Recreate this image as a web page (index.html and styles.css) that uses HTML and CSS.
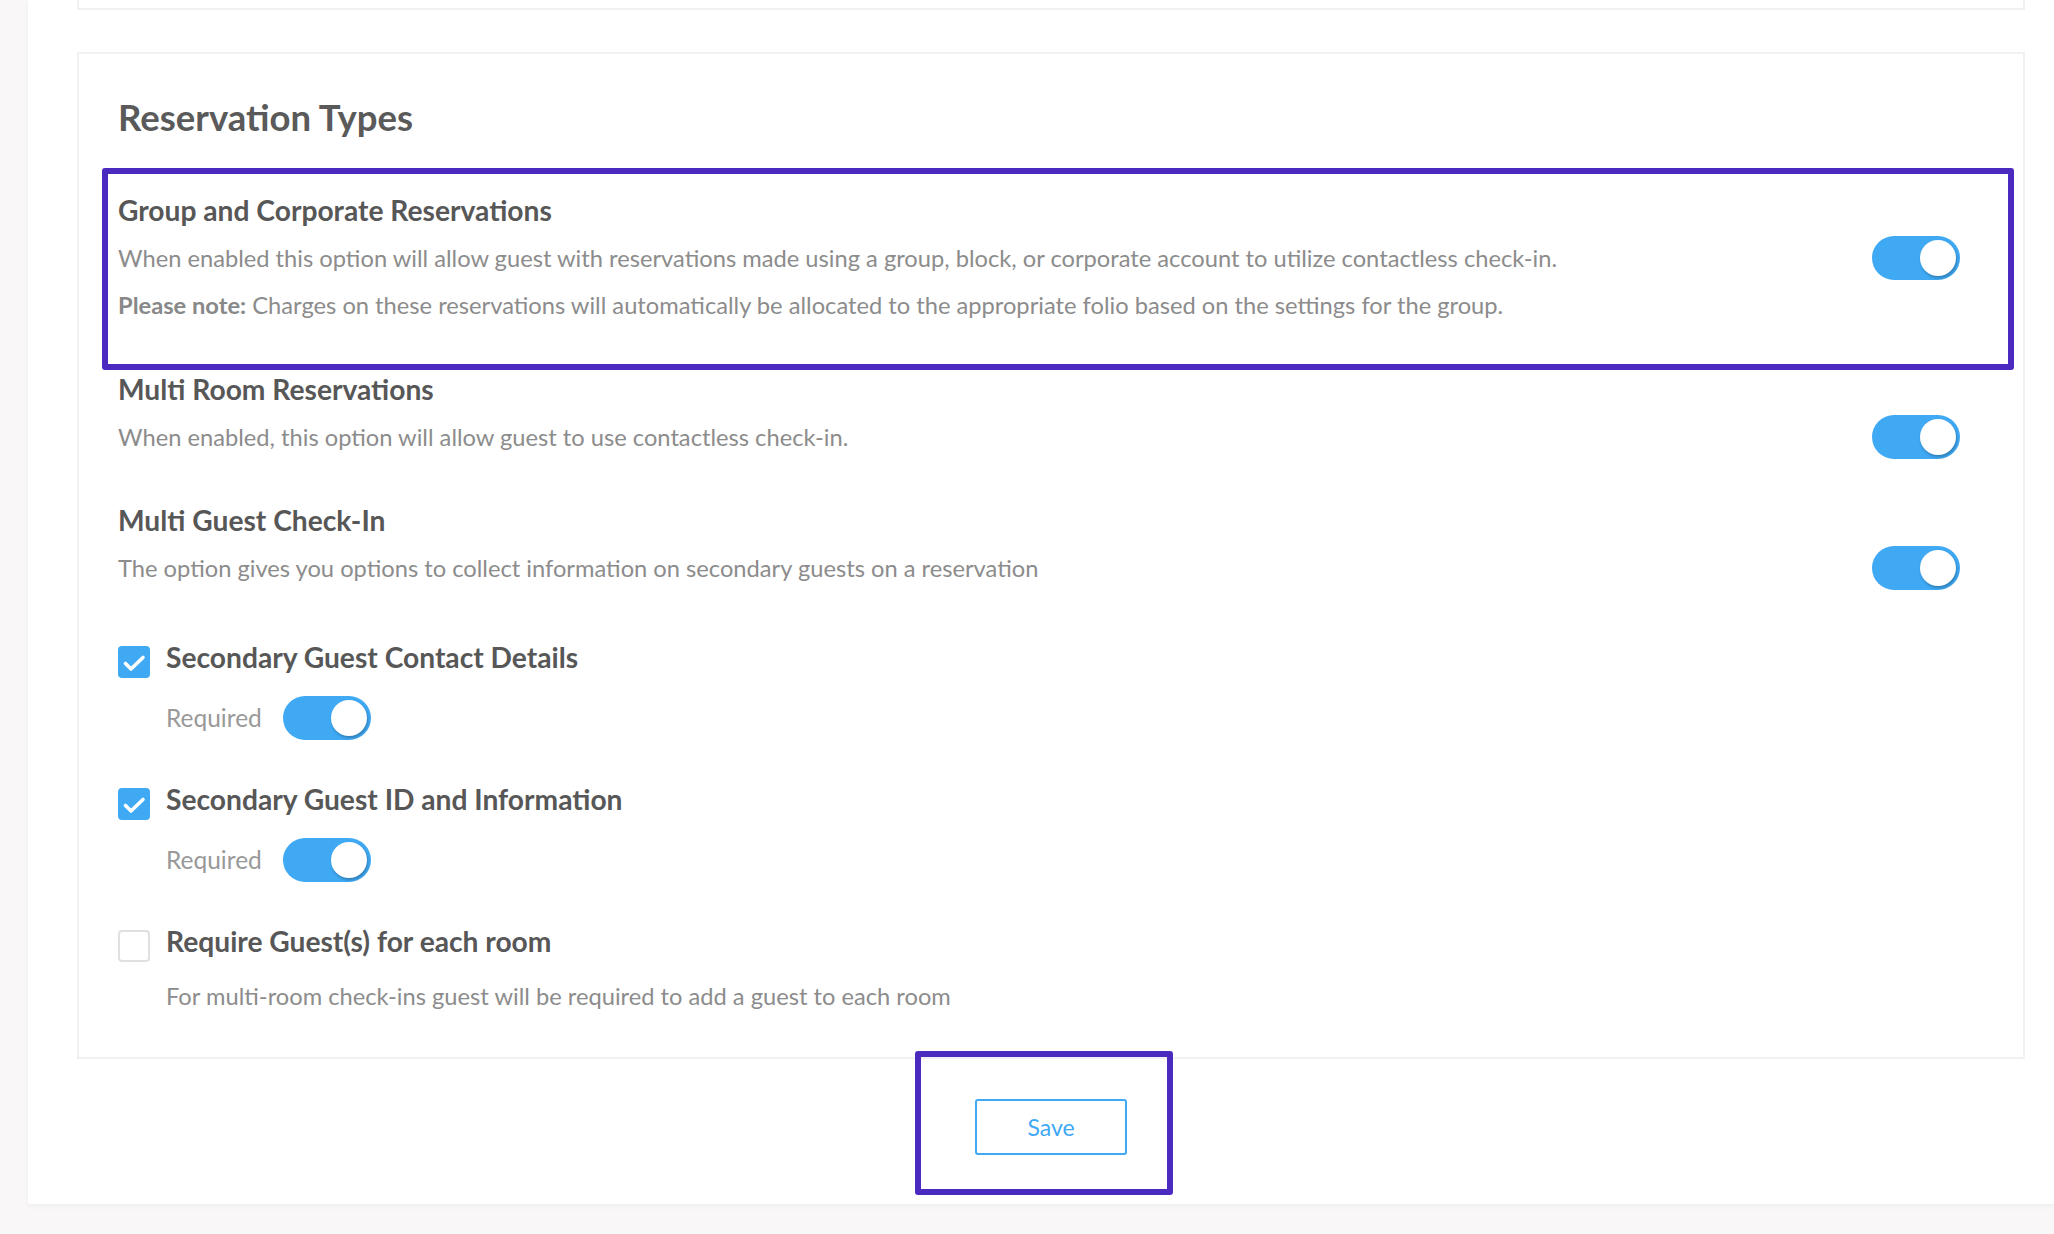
FILE: index.html
```html
<!DOCTYPE html>
<html lang="en">
  <head>
    <meta charset="UTF-8" />
    <meta name="viewport" content="width=device-width, initial-scale=1.0" />
    <title>Reservation Types</title>
    <link rel="stylesheet" href="styles.css">
  </head>
  <body>
    <div class="panel">
      <div class="top-card"></div>

      <section class="card">
        <h2 class="card-title">Reservation Types</h2>

        <div class="option option-group highlight">
          <h3 class="option-title">Group and Corporate Reservations</h3>
          <div class="option-line">
            <p class="option-desc">When enabled this option will allow guest with reservations made using a group, block, or corporate account to utilize contactless check-in.</p>
            <span class="switch"><span class="knob"></span></span>
          </div>
          <p class="option-desc option-note"><strong>Please note:</strong> Charges on these reservations will automatically be allocated to the appropriate folio based on the settings for the group.</p>
        </div>

        <div class="option option-room">
          <h3 class="option-title">Multi Room Reservations</h3>
          <div class="option-line">
            <p class="option-desc">When enabled, this option will allow guest to use contactless check-in.</p>
            <span class="switch"><span class="knob"></span></span>
          </div>
        </div>

        <div class="option option-guest">
          <h3 class="option-title">Multi Guest Check-In</h3>
          <div class="option-line">
            <p class="option-desc">The option gives you options to collect information on secondary guests on a reservation</p>
            <span class="switch"><span class="knob"></span></span>
          </div>
        </div>

        <div class="sub-option">
          <div class="check-line">
            <span class="checkbox checked">
              <svg width="32" height="32" viewBox="0 0 32 32"><polyline points="7.5,17.5 13,23 25,11.5" fill="none" stroke="#fff" stroke-width="3.6" stroke-linecap="round" stroke-linejoin="round"/></svg>
            </span>
            <span class="sub-title">Secondary Guest Contact Details</span>
          </div>
          <div class="required-line">
            <span class="required-label">Required</span>
            <span class="switch"><span class="knob"></span></span>
          </div>
        </div>

        <div class="sub-option">
          <div class="check-line">
            <span class="checkbox checked">
              <svg width="32" height="32" viewBox="0 0 32 32"><polyline points="7.5,17.5 13,23 25,11.5" fill="none" stroke="#fff" stroke-width="3.6" stroke-linecap="round" stroke-linejoin="round"/></svg>
            </span>
            <span class="sub-title">Secondary Guest ID and Information</span>
          </div>
          <div class="required-line">
            <span class="required-label">Required</span>
            <span class="switch"><span class="knob"></span></span>
          </div>
        </div>

        <div class="sub-option last">
          <div class="check-line">
            <span class="checkbox"></span>
            <span class="sub-title">Require Guest(s) for each room</span>
          </div>
          <p class="option-desc sub-desc">For multi-room check-ins guest will be required to add a guest to each room</p>
        </div>
      </section>

      <div class="actions">
        <button class="save-button highlight">Save</button>
      </div>
    </div>
  </body>
</html>
```

FILE: styles.css
```css
body {
  margin: 0;
  min-height: 100vh;
  background-color: #f9f7f8;
  font-family: Lato, "Open Sans", sans-serif;
}

.panel {
  margin-left: 28px;
  padding: 0 29px 49px 49px;
  background-color: white;
  box-shadow: 0 2px 5px rgba(0, 0, 0, 0.05);
}

.top-card {
  height: 8px;
  border: 2px solid #f1f1f1;
  border-top: none;
  background-color: white;
}

.card {
  margin-top: 42px;
  border: 2px solid #f1f1f1;
  padding: 41px 63px 46px 39px;
}

.card-title {
  margin: 0 0 54px;
  font-size: 36.5px;
  line-height: 44px;
  font-weight: 700;
  color: #5a5a5a;
}

.option-title,
.sub-title {
  margin: 0;
  font-size: 28.2px;
  line-height: 34px;
  font-weight: 700;
  color: #575757;
}

.option-line {
  display: flex;
  justify-content: space-between;
  align-items: center;
  height: 44px;
  margin-top: 9px;
}

.option-desc {
  margin: 0;
  font-size: 23.7px;
  line-height: 30px;
  color: #8c8c8c;
}

.option-desc strong {
  font-weight: 700;
  color: #888;
}

.option-note {
  margin-top: 10px;
}

.option-group {
  margin-bottom: 52px;
}

.option-room {
  margin-bottom: 44px;
}

.option-guest {
  margin-bottom: 50px;
}

.highlight {
  position: relative;
}

.highlight::after {
  content: "";
  position: absolute;
  border: 6px solid #4b2ac0;
  border-radius: 3px;
  pointer-events: none;
}

.option-group::after {
  top: -25px;
  bottom: -50px;
  left: -16px;
  right: -54px;
}

.switch {
  position: relative;
  flex-shrink: 0;
  width: 88px;
  height: 44px;
  border-radius: 22px;
  background-color: #3fa9f4;
}

.knob {
  position: absolute;
  top: 4px;
  right: 4px;
  width: 36px;
  height: 36px;
  border-radius: 50%;
  background-color: white;
  box-shadow: 1px 2px 3px rgba(0, 0, 0, 0.25);
}

.sub-option {
  margin-bottom: 42px;
}

.sub-option.last {
  margin-bottom: 0;
}

.check-line {
  display: flex;
  align-items: flex-start;
  gap: 16px;
}

.checkbox {
  display: flex;
  justify-content: center;
  align-items: center;
  box-sizing: border-box;
  width: 32px;
  height: 32px;
  margin-top: 6px;
  border: 2px solid #e0e0e0;
  border-radius: 4px;
  background-color: white;
}

.checkbox.checked {
  border: none;
  background-color: #3fa9f4;
}

.required-line {
  display: flex;
  align-items: center;
  gap: 21px;
  margin-top: 18px;
  padding-left: 48px;
}

.required-label {
  font-size: 24.5px;
  line-height: 30px;
  color: #999;
}

.sub-desc {
  margin-top: 19px;
  padding-left: 48px;
}

.actions {
  display: flex;
  justify-content: center;
  margin-top: 40px;
}

.save-button {
  width: 152px;
  height: 56px;
  border: 2px solid #3fa9f4;
  border-radius: 3px;
  background-color: white;
  color: #3fa9f4;
  font-family: Lato, "Open Sans", sans-serif;
  font-size: 23px;
  cursor: pointer;
}

.save-button::after {
  top: -50px;
  bottom: -42px;
  left: -62px;
  right: -48px;
}
```
